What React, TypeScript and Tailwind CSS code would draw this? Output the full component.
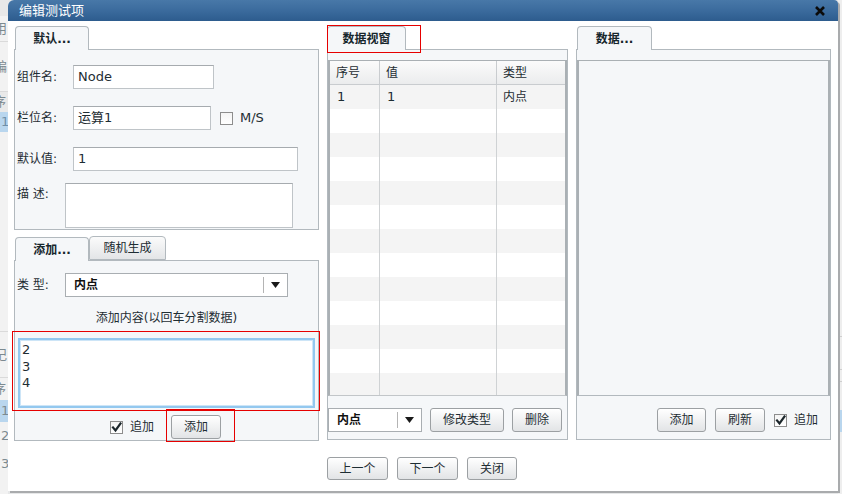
import React from "react";

const F = "font-['DejaVu_Sans','Noto_Sans_CJK_SC',sans-serif]";

function Check({ checked }: { checked?: boolean }) {
  return (
    <div className="flex h-[13px] w-[13px] shrink-0 items-center justify-center border border-[#8d8d8d] bg-gradient-to-b from-[#f4f4f4] to-white">
      {checked && (
        <svg width="11" height="11" viewBox="0 0 11 11">
          <path d="M2 5.5 L4.5 8.5 L9.5 1.5" fill="none" stroke="#1b262b" strokeWidth="2.2" strokeLinecap="square" />
        </svg>
      )}
    </div>
  );
}

function Btn({ children, className }: { children: React.ReactNode; className: string }) {
  return (
    <div
      className={`flex shrink-0 items-center justify-center rounded-[3px] border border-[#9ca0a3] bg-gradient-to-b from-white to-[#e2e4e6] text-[12px] text-[#1e2d33] shadow-[inset_0_1px_0_#fff] ${className}`}
    >
      {children}
    </div>
  );
}

function Select({ className }: { className: string }) {
  return (
    <div className={`flex h-[24px] shrink-0 items-center border border-[#a9aeb2] bg-white ${className}`}>
      <span className="pl-[8px] text-[12px] font-bold text-[#111]">内点</span>
      <div className="flex-1" />
      <div className="h-[16px] w-px bg-[#b4b4b4]" />
      <svg width="9" height="6" viewBox="0 0 9 6" className="mx-[7px]">
        <path d="M0 0 L9 0 L4.5 6 Z" fill="#1a1a1a" />
      </svg>
    </div>
  );
}

function Tab({ children, className, active = true }: { children: React.ReactNode; className: string; active?: boolean }) {
  return (
    <div
      className={`relative z-10 flex h-[24px] shrink-0 items-center justify-center rounded-t-[4px] border border-[#b2b9be] text-[12px] ${
        active ? "border-b-0 bg-[#f5f7f9] font-bold text-[#16262c]" : "mb-px h-[23px] bg-gradient-to-b from-[#fbfbfb] to-[#e3e5e7] text-[#1e2d33]"
      } ${className}`}
    >
      {children}
    </div>
  );
}

function Input({ value, className }: { value: string; className: string }) {
  return (
    <div className={`flex h-[24px] shrink-0 items-center border border-[#bfc4c8] border-t-[#a6abaf] bg-white pl-[4px] text-[13px] text-[#1e2d33] ${className}`}>
      {value}
    </div>
  );
}

export default function App() {
  const rows = Array.from({ length: 13 });
  return (
    <div className={`relative h-[494px] w-[842px] overflow-hidden bg-[#e6e7e8] ${F}`}>
      {/* background page */}
      <div className="flex h-full">
        <div className="flex w-[8px] flex-col overflow-hidden bg-[#f2f2f2] text-[13px] text-[#7c8a90]">
          <div className="h-[16px] bg-[#e8e8e8]" />
          <div className="flex h-[26px] items-center border-b border-[#dadada] -ml-[6px]">用</div>
          <div className="flex h-[50px] items-center border-b border-[#dadada] -ml-[6px]">编</div>
          <div className="flex h-[20px] items-center bg-[#e9e9e9] -ml-[7px]">序</div>
          <div className="flex h-[20px] items-center bg-[#b9d6ee] pl-[1px] text-[#6f8fa8]">1</div>
          <div className="h-[200px] border-b border-[#dadada]" />
          <div className="flex h-[46px] items-center border-b border-[#dadada] -ml-[6px]">记</div>
          <div className="flex h-[22px] items-center -ml-[7px]">序</div>
          <div className="flex h-[22px] items-center bg-[#b9d6ee] pl-[1px]">1</div>
          <div className="flex h-[28px] items-center pl-[1px]">2</div>
          <div className="flex h-[28px] items-center pl-[1px]">3</div>
        </div>
        <div className="flex-1" />
        <div className="flex w-[4px] flex-col bg-[#eeeeee]">
          <div className="h-[337px] border-b border-[#cfcfcf]" />
          <div className="h-[33px] border-b border-[#cfcfcf]" />
          <div className="h-[12px] border-b border-[#cfcfcf]" />
          <div className="mt-[28px] h-[22px] bg-[#b9d6ee]" />
        </div>
      </div>

      {/* dialog window */}
      <div className="absolute left-[8px] top-0 flex h-[491px] w-[830px] flex-col rounded-tl-[6px] rounded-tr-[4px] bg-white shadow-[2px_2px_0_#a9abad]">
        <div className="flex h-[21px] shrink-0 items-center justify-between rounded-tl-[6px] rounded-tr-[4px] bg-gradient-to-b from-[#4878a8] via-[#3b6b9d] to-[#2d5c8e] pl-[11px] pr-[13px]">
          <span className="text-[13px] text-white">编辑测试项</span>
          <svg width="10" height="10" viewBox="0 0 10 10">
            <path d="M1 1 L9 9 M9 1 L1 9" stroke="#0b0b0b" strokeWidth="2.6" />
          </svg>
        </div>

        <div className="flex flex-1 gap-[8px] pl-[6px] pt-[5px]">
          {/* left column */}
          <div className="flex w-[305px] shrink-0 flex-col">
            <div className="flex">
              <Tab className="ml-[1px] w-[74px]">默认...</Tab>
            </div>
            <div className="-mt-px flex h-[181px] flex-col border border-[#b2b9be] bg-[#f5f7f9] pl-[2px] text-[12px] text-[#1e2d33]">
              <div className="mt-[15px] flex items-center">
                <span className="w-[56px]">组件名:</span>
                <Input value="Node" className="w-[141px]" />
              </div>
              <div className="mt-[17px] flex items-center">
                <span className="w-[56px]">栏位名:</span>
                <Input value="运算1" className="w-[138px]" />
                <div className="ml-[9px]"><Check /></div>
                <span className="ml-[7px] text-[13px]">M/S</span>
              </div>
              <div className="mt-[17px] flex items-center">
                <span className="w-[56px]">默认值:</span>
                <Input value="1" className="w-[225px]" />
              </div>
              <div className="mt-[12px] flex items-start">
                <span className="mt-[2px] w-[48px]">描 述:</span>
                <div className="h-[45px] w-[228px] border border-[#bfc4c8] border-t-[#a6abaf] bg-white" />
              </div>
            </div>

            <div className="mt-[6px] flex items-end">
              <Tab className="ml-[1px] w-[74px]">添加...</Tab>
              <Tab className="w-[77px]" active={false}>随机生成</Tab>
            </div>
            <div className="-mt-px flex h-[181px] flex-col border border-[#b2b9be] bg-[#f5f7f9] text-[12px] text-[#1e2d33]">
              <div className="mt-[12px] flex items-center pl-[2px]">
                <span className="w-[48px]">类 型:</span>
                <Select className="w-[223px]" />
              </div>
              <div className="mt-[13px] h-[17px] text-center leading-[17px]">添加内容(以回车分割数据)</div>
              <div className="relative ml-[3px] mt-[11px] h-[70px] w-[297px]">
                <div className="h-full w-full border-2 border-[#93c8ef] bg-white pl-[2px] pt-[2px] shadow-[inset_0_0_0_1px_#cde5f7] text-[13px] leading-[16.5px] text-[#1e2d33]">
                  <div>2</div>
                  <div>3</div>
                  <div>4</div>
                </div>
                <div className="absolute -left-[6px] -top-[7px] z-20 h-[80px] w-[308px] border border-[#e60000]" />
              </div>
              <div className="mt-[7px] flex items-center justify-center pr-[2px]">
                <Check checked />
                <span className="ml-[7px]">追加</span>
                <div className="relative ml-[17px]">
                  <Btn className="h-[24px] w-[50px]">添加</Btn>
                  <div className="absolute -left-[5px] -top-[6px] z-20 h-[33px] w-[69px] border border-[#e60000]" />
                </div>
              </div>
            </div>
          </div>

          {/* middle column */}
          <div className="flex w-[241px] shrink-0 flex-col">
            <div className="relative flex">
              <Tab className="w-[79px]">数据视窗</Tab>
              <div className="absolute -top-[1px] left-0 z-20 h-[28px] w-[94px] border border-[#e60000]" />
            </div>
            <div className="-mt-px flex h-[391px] flex-col border border-[#b2b9be] bg-[#f5f7f9] text-[12px] text-[#1e2d33]">
              <div className="mt-[10px] h-[336px] overflow-hidden border border-x-2 border-[#aab0b4] border-b-[#c2c6c9] bg-white">
                <div className="flex h-[24px] border-b border-[#c9cccf] bg-gradient-to-b from-[#fbfbfb] to-[#ebeced]">
                  <div className="flex w-[50px] items-center border-r border-[#c9cccf] pl-[6px]">序号</div>
                  <div className="flex w-[117px] items-center border-r border-[#c9cccf] pl-[6px]">值</div>
                  <div className="flex flex-1 items-center pl-[6px]">类型</div>
                </div>
                {rows.map((_, i) => (
                  <div key={i} className={`flex h-[24px] ${i % 2 === 0 ? "bg-[#f4f4f4]" : "bg-white"}`}>
                    <div className="flex w-[50px] items-center border-r border-[#cfd2d4] pl-[7px] text-[13px]">{i === 0 ? "1" : ""}</div>
                    <div className="flex w-[117px] items-center border-r border-[#cfd2d4] pl-[7px] text-[13px]">{i === 0 ? "1" : ""}</div>
                    <div className="flex flex-1 items-center pl-[6px]">{i === 0 ? "内点" : ""}</div>
                  </div>
                ))}
              </div>
              <div className="mt-[12px] flex items-center">
                <Select className="w-[94px]" />
                <Btn className="ml-[8px] h-[24px] w-[74px]">修改类型</Btn>
                <Btn className="ml-[8px] h-[24px] w-[50px]">删除</Btn>
              </div>
            </div>
            <div className="mt-[17px] flex gap-[9px]">
              <Btn className="h-[23px] w-[61px]">上一个</Btn>
              <Btn className="h-[23px] w-[61px]">下一个</Btn>
              <Btn className="h-[23px] w-[50px]">关闭</Btn>
            </div>
          </div>

          {/* right column */}
          <div className="flex w-[255px] shrink-0 flex-col">
            <div className="flex">
              <Tab className="ml-[1px] w-[75px]">数据...</Tab>
            </div>
            <div className="-mt-px flex h-[391px] flex-col border border-[#b2b9be] bg-[#f5f7f9] text-[12px] text-[#1e2d33]">
              <div className="mt-[10px] h-[336px] border border-x-2 border-[#aab0b4] border-b-[#b2b9be] bg-[#f5f7f9]" />
              <div className="mt-[12px] flex items-center justify-end pr-[12px]">
                <Btn className="h-[24px] w-[49px]">添加</Btn>
                <Btn className="ml-[9px] h-[24px] w-[50px]">刷新</Btn>
                <div className="ml-[9px]"><Check checked /></div>
                <span className="ml-[7px]">追加</span>
              </div>
            </div>
          </div>
        </div>
      </div>
    </div>
  );
}
